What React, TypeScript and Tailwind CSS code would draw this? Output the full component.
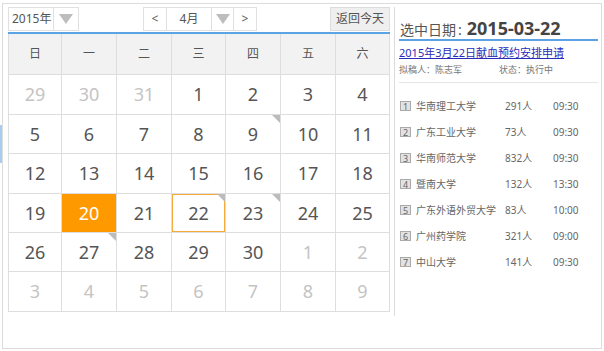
const weekDays = ['日', '一', '二', '三', '四', '五', '六'];
const colWidths = 'grid-cols-[53px_55px_55px_54px_55px_55px_54px]';
const rowHeights = ['h-[40px]', 'h-[39px]', 'h-[40px]', 'h-[39px]', 'h-[39px]', 'h-[40px]'];

type Day = { d: number; other?: boolean; mark?: boolean; active?: boolean; picked?: boolean };

const weeks: Day[][] = [
  [{ d: 29, other: true }, { d: 30, other: true }, { d: 31, other: true }, { d: 1 }, { d: 2 }, { d: 3 }, { d: 4 }],
  [{ d: 5 }, { d: 6 }, { d: 7 }, { d: 8 }, { d: 9, mark: true }, { d: 10 }, { d: 11 }],
  [{ d: 12 }, { d: 13 }, { d: 14 }, { d: 15 }, { d: 16 }, { d: 17 }, { d: 18 }],
  [{ d: 19 }, { d: 20, active: true }, { d: 21 }, { d: 22, picked: true, mark: true }, { d: 23, mark: true }, { d: 24 }, { d: 25 }],
  [{ d: 26 }, { d: 27, mark: true }, { d: 28 }, { d: 29 }, { d: 30 }, { d: 1, other: true }, { d: 2, other: true }],
  [3, 4, 5, 6, 7, 8, 9].map((d) => ({ d, other: true })),
];

const plans = [
  { no: 1, school: '华南理工大学', people: '291人', time: '09:30' },
  { no: 2, school: '广东工业大学', people: '73人', time: '09:30' },
  { no: 3, school: '华南师范大学', people: '832人', time: '09:30' },
  { no: 4, school: '暨南大学', people: '132人', time: '13:30' },
  { no: 5, school: '广东外语外贸大学', people: '83人', time: '10:00' },
  { no: 6, school: '广州药学院', people: '321人', time: '09:00' },
  { no: 7, school: '中山大学', people: '141人', time: '09:30' },
];

function DownArrow() {
  return (
    <svg width="14" height="10" viewBox="0 0 14 10">
      <path d="M0 0 L14 0 L7 10 Z" fill="#bdbdbd" />
    </svg>
  );
}

function Toolbar() {
  return (
    <div className="flex h-[24px] items-stretch text-[12px] text-[#555]">
      <div className="flex border border-[#e0e0e0]">
        <div className="flex w-[44px] items-center pl-[3px]">2015年</div>
        <div className="flex w-[25px] items-center justify-center border-l border-[#e0e0e0]">
          <DownArrow />
        </div>
      </div>
      <div className="ml-[64px] flex border border-[#e0e0e0]">
        <div className="flex w-[22px] items-center justify-center">&lt;</div>
        <div className="flex w-[45px] items-center justify-center border-l border-[#e0e0e0]">4月</div>
        <div className="flex w-[22px] items-center justify-center border-l border-[#e0e0e0]">
          <DownArrow />
        </div>
        <div className="flex w-[23px] items-center justify-center border-l border-[#e0e0e0]">&gt;</div>
      </div>
      <button
        type="button"
        className="ml-auto w-[60px] border border-[#dcdcdc] bg-[#efefef] text-[12px] text-[#555]"
      >
        返回今天
      </button>
    </div>
  );
}

function DayCell({ day, h }: { day: Day; h: string }) {
  let cls = 'text-[#555]';
  if (day.other) cls = 'text-[#c4c4c4]';
  if (day.active) cls = 'bg-[#ff9900] text-white';
  return (
    <div className={`relative flex ${h} items-center justify-center border-r border-b border-[#dedede] text-[18px] ${cls}`}>
      {day.picked && <div className="absolute inset-0 border border-[#f5ab3c]" />}
      {day.mark && (
        <svg className="absolute top-0 right-0" width="8" height="8" viewBox="0 0 8 8">
          <path d="M0 0 L8 0 L8 8 Z" fill="#bcbcbc" />
        </svg>
      )}
      <span className="relative">{day.d}</span>
    </div>
  );
}

function Calendar() {
  return (
    <div className="w-[382px]">
      <Toolbar />
      <div className="mt-px h-[2px] bg-[#5ba3e4]" />
      <div className={`grid ${colWidths} border-l border-[#dedede]`}>
        {weekDays.map((w) => (
          <div
            key={w}
            className="flex h-[41px] items-center justify-center border-r border-b border-[#dedede] bg-[#f2f2f2] text-[12px] text-[#555]"
          >
            {w}
          </div>
        ))}
        {weeks.map((week, i) =>
          week.map((day, j) => <DayCell key={`${i}-${j}`} day={day} h={rowHeights[i]} />),
        )}
      </div>
    </div>
  );
}

function DetailPanel() {
  return (
    <div className="w-[199px] pt-[6px]">
      <div className="flex h-[24px] items-end px-[1px] leading-none">
        <span className="text-[14px] text-[#555]">选中日期</span>
        <span className="mr-[5px] ml-[2px] text-[14px] text-[#555]">:</span>
        <span className="text-[18px] font-bold text-[#444]">2015-03-22</span>
      </div>
      <div className="mt-[2px] h-[2px] bg-[#5ba3e4]" />
      <a href="#" className="mt-[4px] block text-[11px] leading-[16px] text-[#2b2bbb] underline">
        2015年3月22日献血预约安排申请
      </a>
      <div className="mt-[2px] flex text-[9px] leading-[14px] text-[#777]">
        <span className="w-[100px]">拟稿人：陈志军</span>
        <span>状态：执行中</span>
      </div>
      <div className="mt-[5px] h-px bg-[#e6e6e6]" />
      <div className="mt-[10px] flex flex-col">
        {plans.map((p) => (
          <div key={p.no} className="flex h-[26px] items-center text-[10px] text-[#666]">
            <span className="mr-[5px] ml-[1px] flex h-[10px] w-[11px] items-center justify-center border border-[#aaa] bg-[#e2e2e2] text-[9px] leading-none text-[#666]">
              {p.no}
            </span>
            <span className="w-[89px]">{p.school}</span>
            <span className="w-[48px]">{p.people}</span>
            <span>{p.time}</span>
          </div>
        ))}
      </div>
    </div>
  );
}

export default function App() {
  return (
    <div
      className="relative h-[351px] w-[604px] bg-white pt-[3px] pl-[2px]"
      style={{ fontFamily: '"Noto Sans", "Noto Sans CJK SC", sans-serif' }}
    >
      <div className="absolute top-[125px] left-0 h-[38px] w-[2px] bg-[#a9cdef]" />
      <div className="flex h-[346px] w-[600px] border border-[#dcdcdc] pt-[3px] pl-[5px]">
        <Calendar />
        <div className="ml-[4px] h-[309px] w-px bg-[#dcdcdc]" />
        <div className="ml-[4px]">
          <DetailPanel />
        </div>
      </div>
    </div>
  );
}
